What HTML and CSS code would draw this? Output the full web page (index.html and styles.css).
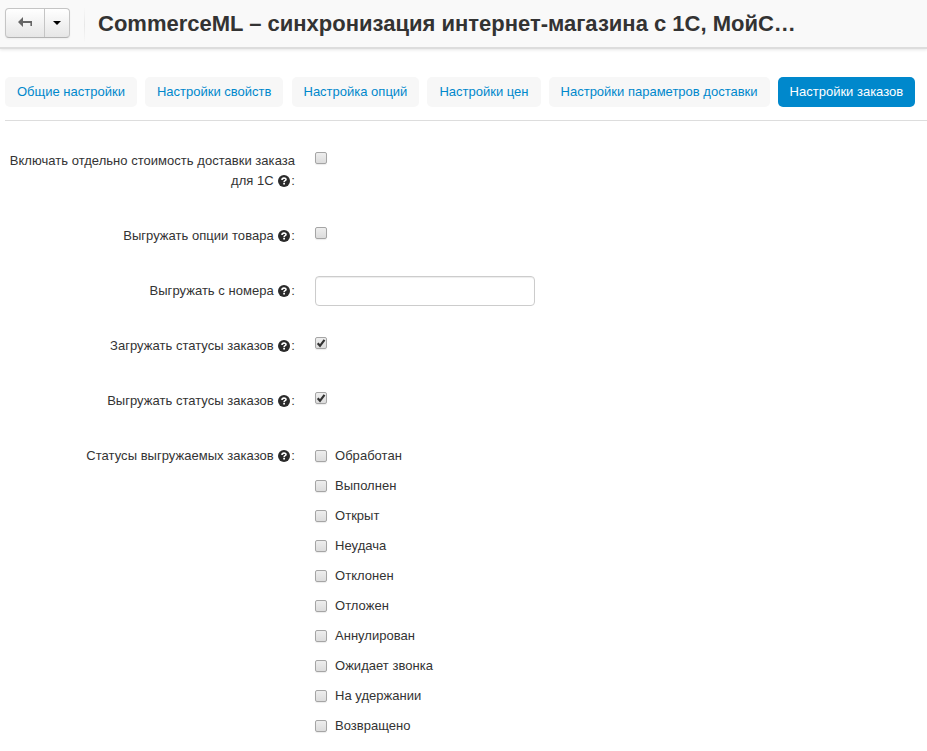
FILE: index.html
```html
<!DOCTYPE html>
<html lang="ru">
<head>
<meta charset="utf-8">
<title>CommerceML</title>
<link rel="stylesheet" href="styles.css">
</head>
<body>
<svg class="defs" width="0" height="0" aria-hidden="true">
  <symbol id="help" viewBox="0 0 12 12">
    <circle cx="6" cy="6" r="6" fill="#2b2b2b"/>
    <path d="M4 4.9C4 2.6 8 2.6 8 4.5C8 5.8 6.1 5.5 6.1 7" fill="none" stroke="#fff" stroke-width="1.6"/>
    <path d="M5.2 7.8h1.8v1.6H5.2z" fill="#fff"/>
  </symbol>
</svg>
<header class="bar">
  <div class="btn-group">
    <button class="btn btn-back" aria-label="Назад"><svg width="15" height="12" viewBox="0 0 15 12"><path d="M0 5L5 0v4h9v5h-1.6V6H5v4z" fill="#666"/></svg></button>
    <button class="btn btn-caret" aria-label="Меню"><span class="caret"></span></button>
  </div>
  <h1 class="title">CommerceML – синхронизация интернет-магазина с 1С, МойС…</h1>
</header>
<nav class="tabs">
  <a class="tab">Общие настройки</a>
  <a class="tab">Настройки свойств</a>
  <a class="tab">Настройка опций</a>
  <a class="tab">Настройки цен</a>
  <a class="tab">Настройки параметров доставки</a>
  <a class="tab active">Настройки заказов</a>
</nav>
<form class="form">
  <div class="row"><label class="label">Включать отдельно стоимость доставки заказа для 1С <svg class="help"><use href="#help"/></svg>:</label><div class="control"><span class="check"></span></div></div>
  <div class="row"><label class="label">Выгружать опции товара <svg class="help"><use href="#help"/></svg>:</label><div class="control"><span class="check"></span></div></div>
  <div class="row"><label class="label">Выгружать с номера <svg class="help"><use href="#help"/></svg>:</label><div class="control"><input class="field" type="text"></div></div>
  <div class="row"><label class="label">Загружать статусы заказов <svg class="help"><use href="#help"/></svg>:</label><div class="control"><span class="check"><svg class="tick" viewBox="0 0 10 10"><path d="M1.7 5.2L4 7.8L8.5 1.8" /></svg></span></div></div>
  <div class="row"><label class="label">Выгружать статусы заказов <svg class="help"><use href="#help"/></svg>:</label><div class="control"><span class="check"><svg class="tick" viewBox="0 0 10 10"><path d="M1.7 5.2L4 7.8L8.5 1.8" /></svg></span></div></div>
  <div class="row"><label class="label">Статусы выгружаемых заказов <svg class="help"><use href="#help"/></svg>:</label>
    <div class="options">
      <label class="option"><span class="check"></span>Обработан</label>
      <label class="option"><span class="check"></span>Выполнен</label>
      <label class="option"><span class="check"></span>Открыт</label>
      <label class="option"><span class="check"></span>Неудача</label>
      <label class="option"><span class="check"></span>Отклонен</label>
      <label class="option"><span class="check"></span>Отложен</label>
      <label class="option"><span class="check"></span>Аннулирован</label>
      <label class="option"><span class="check"></span>Ожидает звонка</label>
      <label class="option"><span class="check"></span>На удержании</label>
      <label class="option"><span class="check"></span>Возвращено</label>
    </div>
  </div>
</form>
</body>
</html>
```
FILE: styles.css
```css
* { box-sizing: border-box; }
body {
  margin: 0;
  background: #fff;
  color: #333;
  font: 13px/20px "Liberation Sans", Arial, sans-serif;
  overflow: hidden;
}
.defs { position: absolute; }
.bar {
  display: flex;
  height: 47px;
  padding: 8px 0 0 5px;
  background: #f9f9f9;
  box-shadow: 0 1px 0 1px #ddd, 0 3px 3px rgba(0, 0, 0, .1);
}
.btn-group {
  display: flex;
  width: 65px;
  height: 30px;
  border: 1px solid #c5c5c5;
  border-bottom-color: #b3b3b3;
  border-radius: 4px;
  background: linear-gradient(#fff, #e6e6e6);
  box-shadow: 0 1px 2px rgba(0, 0, 0, .05);
}
.btn {
  display: flex;
  align-items: center;
  justify-content: center;
  padding: 0;
  border: 0;
  background: none;
}
.btn-back { width: 39px; border-right: 1px solid #c5c5c5; }
.btn-caret { width: 24px; }
.caret {
  border: 4px solid transparent;
  border-top-color: #000;
  border-bottom: 0;
}
.title {
  height: 34px;
  margin: 0 0 0 14px;
  padding-left: 13px;
  border-left: 1px solid;
  border-image: linear-gradient(#f9f9f9, #e8e8e8 50%, #f9f9f9) 1;
  font-size: 22px;
  line-height: 32px;
  white-space: nowrap;
}
.tabs {
  display: flex;
  gap: 8.07px;
  height: 44px;
  margin: 30px 0 0 5px;
  border-bottom: 1px solid #ddd;
}
.tab {
  height: 30px;
  padding: 5px 12px;
  border-radius: 5px;
  background: #f7f7f7;
  color: #08c;
  white-space: nowrap;
}
.tab.active { background: #08c; color: #fff; }
.form {
  display: flex;
  flex-direction: column;
  gap: 25px;
  padding: 25px 0 0 5px;
  letter-spacing: .03px;
}
.row { display: flex; gap: 20px; }
.row:first-child { height: 50px; }
.label { width: 290px; padding-top: 5px; text-align: right; }
.help { width: 12px; height: 12px; margin: 0 1px; vertical-align: -2px; }
.control { height: 30px; padding-top: 6px; }
.control:has(.field) { padding-top: 0; }
.check {
  display: block;
  width: 12px;
  height: 12px;
  border: 1px solid #a5a5a5;
  border-radius: 2px;
  background: linear-gradient(#eee, #dcdcdc);
  box-shadow: 0 1px 1px rgba(0, 0, 0, .08);
}
.tick { display: block; width: 10px; height: 10px; }
.tick path { fill: none; stroke: #333; stroke-width: 2.2; }
.field {
  display: block;
  width: 220px;
  height: 30px;
  border: 1px solid #ccc;
  border-radius: 4px;
  background: #fff;
  box-shadow: inset 0 1px 1px rgba(0, 0, 0, .075);
}
.options { padding-top: 5px; }
.option { display: flex; align-items: center; gap: 8px; height: 20px; margin-bottom: 10px; }
```
